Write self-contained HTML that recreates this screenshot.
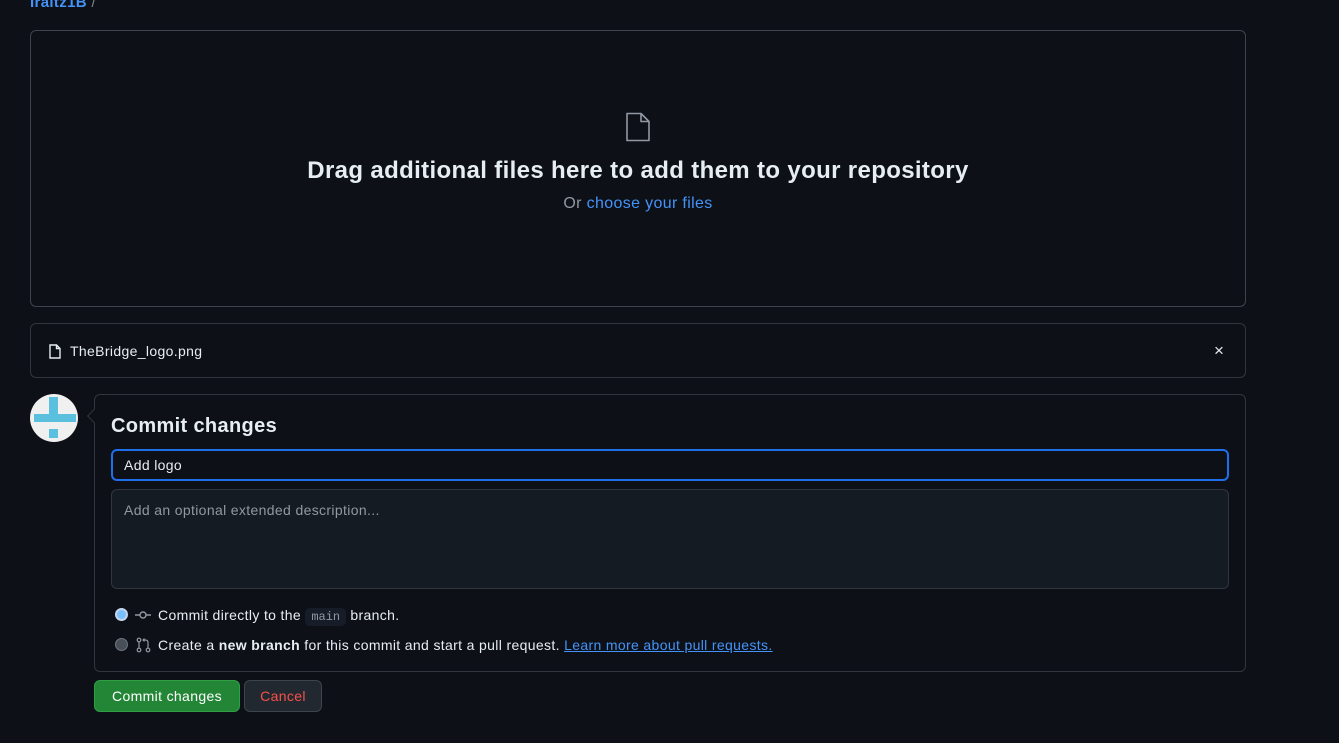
<!DOCTYPE html>
<html><head><meta charset="utf-8"><style>
*{box-sizing:border-box;margin:0;padding:0}
body{width:1339px;height:743px;background:#0d1117;color:#e6edf3;font-family:"Liberation Sans",sans-serif;font-size:14px;position:relative;overflow:hidden;letter-spacing:0.35px}
.abs{position:absolute}
a{color:#4493f8;text-decoration:none}
.box{border:1px solid #30363d;border-radius:6px}
</style></head><body>
<div class="abs" style="left:30px;top:-6px;font-size:15px;font-weight:bold"><a>Iraitz1B</a> <span style="color:#7d8590;font-weight:normal">/</span></div>
<div class="abs box" style="left:30px;top:30px;width:1216px;height:277px;border-color:#3d444d"></div>
<svg class="abs" style="left:624px;top:112px" width="28" height="30" viewBox="0 0 28 30"><path d="M3 1.5h14l8 8V28.5H3z M17 1.5v8h8" fill="none" stroke="#9198a1" stroke-width="1.6" stroke-linejoin="round"/></svg>
<div class="abs" style="left:30px;width:1216px;top:157px;text-align:center;font-size:24px;font-weight:bold;color:#e6edf3">Drag additional files here to add them to your repository</div>
<div class="abs" style="left:30px;width:1216px;top:195px;text-align:center;font-size:16px;color:#9198a1">Or <a>choose your files</a></div>
<div class="abs box" style="left:30px;top:323px;width:1216px;height:55px"></div>
<svg class="abs" style="left:49px;top:344px" width="12" height="15" viewBox="0 0 12 15"><path d="M1 1h6.5l3.5 3.5V14H1z M7.5 1v3.5H11" fill="none" stroke="#e6edf3" stroke-width="1.4"/></svg>
<div class="abs" style="left:70px;top:343px">TheBridge_logo.png</div>
<div class="abs" style="left:1214px;top:341px;font-size:17px;color:#e6edf3">×</div>
<div class="abs" style="left:30px;top:394px;width:48px;height:48px;border-radius:50%;background:#f0f0f0;overflow:hidden">
<div class="abs" style="left:19px;top:3px;width:9px;height:25px;background:#5bc0de"></div>
<div class="abs" style="left:4px;top:20px;width:42px;height:8px;background:#5bc0de"></div>
<div class="abs" style="left:19px;top:35px;width:9px;height:9px;background:#5bc0de"></div>
</div>
<div class="abs box" style="left:94px;top:394px;width:1152px;height:278px"></div>
<div class="abs" style="left:89px;top:411px;width:10px;height:10px;background:#0d1117;border-left:1px solid #30363d;border-bottom:1px solid #30363d;transform:rotate(45deg)"></div>
<div class="abs" style="left:111px;top:415px;font-size:20px;font-weight:bold">Commit changes</div>
<div class="abs" style="left:111px;top:449px;width:1118px;height:32px;border:2px solid #1f6feb;border-radius:6px;background:#0d1117;padding:6px 11px;font-size:14px">Add logo</div>
<div class="abs" style="left:111px;top:489px;width:1118px;height:100px;border:1px solid #30363d;border-radius:6px;background:#151b23;padding:12px 12px;color:#9198a1">Add an optional extended description...</div>
<div class="abs" style="left:115px;top:608px;width:13px;height:13px;border-radius:50%;background:#79c0ff;border:2px solid #c4d6ec"></div>
<svg class="abs" style="left:135px;top:609px" width="16" height="12" viewBox="0 0 16 12"><path d="M0 6h4.5M11.5 6H16" stroke="#9198a1" stroke-width="1.4"/><circle cx="8" cy="6" r="3" fill="none" stroke="#9198a1" stroke-width="1.4"/></svg>
<div class="abs" style="left:158px;top:607px">Commit directly to the <span style="font-family:'Liberation Mono',monospace;font-size:12px;background:#161d29;color:#9198a1;padding:2px 6px;border-radius:5px;letter-spacing:0">main</span> branch.</div>
<div class="abs" style="left:115px;top:638px;width:13px;height:13px;border-radius:50%;background:#484f58;border:1px solid #6e7681"></div>
<svg class="abs" style="left:136px;top:637px" width="15" height="16" viewBox="0 0 15 16"><circle cx="3" cy="3" r="1.8" fill="none" stroke="#9198a1" stroke-width="1.2"/><circle cx="3" cy="13" r="1.8" fill="none" stroke="#9198a1" stroke-width="1.2"/><circle cx="12" cy="13" r="1.8" fill="none" stroke="#9198a1" stroke-width="1.2"/><path d="M3 5v6M12 11V5.5Q12 3 9.5 3H7M8.5 1.5L7 3l1.5 1.5" fill="none" stroke="#9198a1" stroke-width="1.2"/></svg>
<div class="abs" style="left:158px;top:637px">Create a <b>new branch</b> for this commit and start a pull request. <a style="text-decoration:underline">Learn more about pull requests.</a></div>
<div class="abs" style="left:94px;top:680px;width:146px;height:32px;background:#238636;border:1px solid #2ea043;border-radius:6px;color:#fff;text-align:center;line-height:30px">Commit changes</div>
<div class="abs" style="left:244px;top:680px;width:78px;height:32px;background:#212830;border:1px solid #3d444d;border-radius:6px;color:#f85149;text-align:center;line-height:30px">Cancel</div>
</body></html>
